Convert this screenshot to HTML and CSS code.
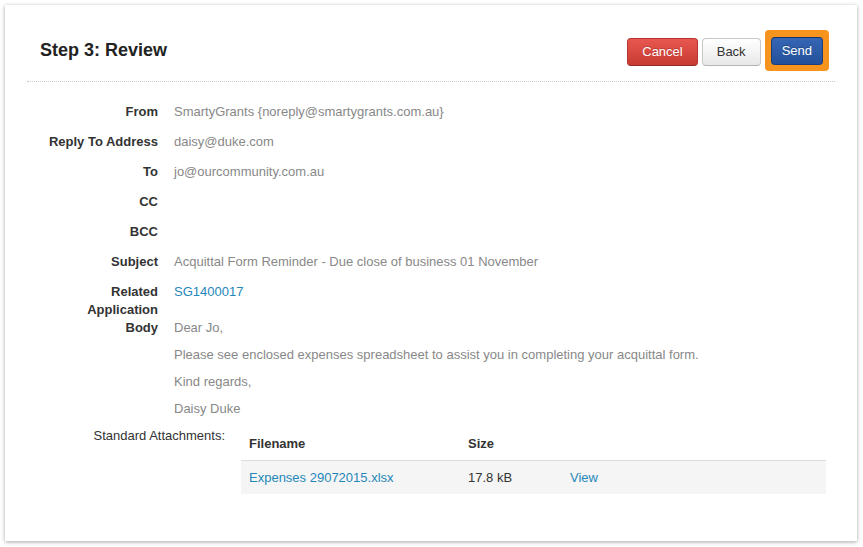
FILE: index.html
```html
<!DOCTYPE html>
<html>
<head>
<meta charset="utf-8">
<link rel="stylesheet" href="styles.css">
</head>
<body>
<div class="panel">
  <div class="header">
    <h1 class="title">Step 3: Review</h1>
    <div class="actions">
      <button class="btn btn-danger">Cancel</button>
      <button class="btn btn-default">Back</button>
      <span class="highlight"><button class="btn btn-primary">Send</button></span>
    </div>
  </div>
  <div class="content">
    <div class="fields">
      <div class="label">From</div><div class="value">SmartyGrants {noreply@smartygrants.com.au}</div>
      <div class="label">Reply To Address</div><div class="value">daisy@duke.com</div>
      <div class="label">To</div><div class="value">jo@ourcommunity.com.au</div>
      <div class="label">CC</div><div class="value"></div>
      <div class="label">BCC</div><div class="value"></div>
      <div class="label">Subject</div><div class="value">Acquittal Form Reminder - Due close of business 01 November</div>
      <div class="label tight">Related Application</div><div class="value tight"><a class="link" href="#">SG1400017</a></div>
      <div class="label flush">Body</div>
      <div class="value flush">
        <p class="para">Dear Jo,</p>
        <p class="para">Please see enclosed expenses spreadsheet to assist you in completing your acquittal form.</p>
        <p class="para">Kind regards,</p>
        <p class="para">Daisy Duke</p>
      </div>
    </div>
    <div class="attachments">
      <div class="att-label">Standard Attachments:</div>
      <table class="att-table">
        <thead>
          <tr><th class="col-name">Filename</th><th class="col-size">Size</th><th></th></tr>
        </thead>
        <tbody>
          <tr><td><a class="link" href="#">Expenses 29072015.xlsx</a></td><td>17.8 kB</td><td><a class="link" href="#">View</a></td></tr>
        </tbody>
      </table>
    </div>
  </div>
</div>
</body>
</html>
```

FILE: styles.css
```css
html, body {
  margin: 0;
  padding: 0;
  background: #fff;
}
body {
  padding: 5px 6px 6px 5px;
  font-family: "Liberation Sans", Arial, Helvetica, sans-serif;
  font-size: 13px;
  color: #333;
}
.panel {
  width: 852px;
  height: 536px;
  box-sizing: border-box;
  background: #fff;
  box-shadow: 0 1px 4px rgba(0,0,0,0.35);
  padding: 0 22px;
}
.header {
  display: flex;
  align-items: center;
  justify-content: space-between;
  padding: 25px 6px 10px 13px;
  border-bottom: 1px dotted #c8c8c8;
}
.title {
  margin: 0;
  font-size: 18px;
  font-weight: bold;
  color: #222;
  line-height: 22px;
  position: relative;
  top: -1px;
}
.actions {
  display: flex;
  align-items: center;
  gap: 4px;
}
.btn {
  font-family: "Liberation Sans", Arial, Helvetica, sans-serif;
  font-size: 13px;
  height: 28px;
  line-height: 26px;
  padding: 0 14px;
  border-radius: 4px;
  cursor: pointer;
  box-sizing: border-box;
}
.btn-danger {
  color: #fff;
  margin-top: 3px;
  background: linear-gradient(#e8574f, #c63b33);
  border: 1px solid #b53630;
  border-bottom-color: #922b26;
  text-shadow: 0 -1px 0 rgba(0,0,0,0.2);
}
.btn-default {
  color: #333;
  margin-top: 3px;
  background: linear-gradient(#ffffff, #e8e8e8);
  border: 1px solid #c8c8c8;
  border-bottom-color: #b3b3b3;
}
.btn-primary {
  color: #fff;
  padding: 0 10px;
  background: linear-gradient(#3666b4, #22509b);
  border: 1px solid #1c3f7c;
  border-top-color: #16336a;
  text-shadow: 0 -1px 0 rgba(0,0,0,0.25);
}
.highlight {
  display: flex;
  padding: 7px 6px 6px 6px;
  background: #f7941d;
  border-radius: 4px;
}
.content {
  padding-top: 15px;
}
.fields {
  display: grid;
  grid-template-columns: 115px 1fr;
  column-gap: 16px;
  padding-left: 16px;
  line-height: 18px;
}
.label {
  font-weight: bold;
  color: #333;
  text-align: right;
  padding: 6px 0;
}
.value {
  color: #888;
  padding: 6px 0;
  min-height: 18px;
}
.tight {
  padding-bottom: 0;
}
.flush {
  padding-top: 0;
}
.para {
  margin: 0 0 9px 0;
}
.para:last-child {
  margin-bottom: 0;
}
.link {
  color: #2587b9;
  text-decoration: none;
}
.attachments {
  display: flex;
  gap: 16px;
  margin-top: 3px;
}
.att-label {
  width: 198px;
  text-align: right;
  line-height: 18px;
  color: #333;
}
.att-table {
  width: 585px;
  border-collapse: collapse;
  line-height: 17px;
}
.att-table th {
  text-align: left;
  font-weight: bold;
  color: #333;
  padding: 8px;
  border-bottom: 1px solid #dcdcdc;
}
.att-table td {
  padding: 8px;
  background: #f5f5f5;
  color: #333;
}
.col-name {
  width: 203px;
}
.col-size {
  width: 86px;
}
```
